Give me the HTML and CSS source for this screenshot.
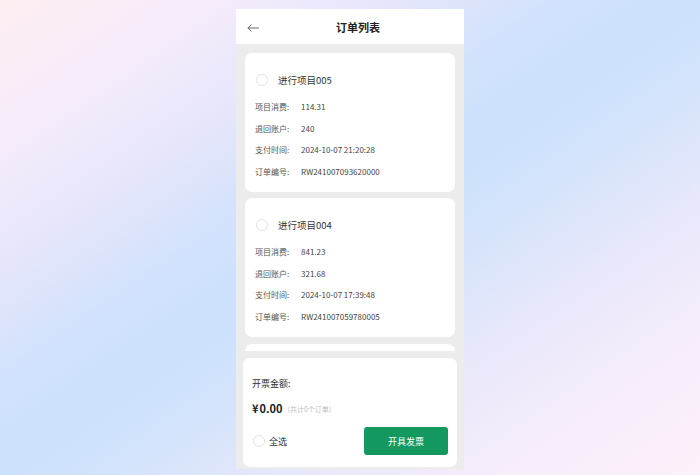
FILE: index.html
```html
<!DOCTYPE html>
<html lang="zh-CN">
<head>
<meta charset="utf-8">
<title>订单列表</title>
<link rel="stylesheet" href="styles.css">
</head>
<body>
<div class="stage">
  <div class="phone">
    <header class="topbar">
      <span class="back">
        <svg width="12" height="8" viewBox="0 0 12 8"><path d="M11.5 4H1M4.2 0.8L1 4l3.2 3.2" fill="none" stroke="#666" stroke-width="1" stroke-linecap="round" stroke-linejoin="round"/></svg>
      </span>
      <h1 class="title">订单列表</h1>
    </header>
    <main class="list">
      <section class="card">
        <div class="card-head"><span class="radio"></span><span class="card-title">进行项目005</span></div>
        <div class="row"><span class="label">项目消费:</span><span class="value">114.31</span></div>
        <div class="row"><span class="label">退回账户:</span><span class="value">240</span></div>
        <div class="row"><span class="label">支付时间:</span><span class="value">2024-10-07 21:20:28</span></div>
        <div class="row"><span class="label">订单编号:</span><span class="value">RW241007093620000</span></div>
      </section>
      <section class="card">
        <div class="card-head"><span class="radio"></span><span class="card-title">进行项目004</span></div>
        <div class="row"><span class="label">项目消费:</span><span class="value">841.23</span></div>
        <div class="row"><span class="label">退回账户:</span><span class="value">321.68</span></div>
        <div class="row"><span class="label">支付时间:</span><span class="value">2024-10-07 17:39:48</span></div>
        <div class="row"><span class="label">订单编号:</span><span class="value">RW241007059780005</span></div>
      </section>
      <section class="card card-peek"></section>
    </main>
    <footer class="footer">
      <div class="amount-label">开票金额:</div>
      <div class="amount"><span class="money"><span class="yen">¥</span>0.00</span><span class="count">(共计0个订单)</span></div>
      <div class="actions">
        <label class="select-all"><span class="radio"></span><span>全选</span></label>
        <button class="invoice-btn">开具发票</button>
      </div>
    </footer>
  </div>
</div>
</body>
</html>
```

FILE: styles.css
```css
* { box-sizing: border-box; margin: 0; padding: 0; }
html, body { height: 100%; }
body {
  font-family: "Noto Sans CJK SC", "Noto Sans", "Liberation Sans", sans-serif;
  background: linear-gradient(to bottom right, #fdeef1 0%, #f7ecfb 14%, #e6e6fb 28%, #d2e2fc 40%, #cbe1fc 50%, #d6e4fb 60%, #e9e8fb 72%, #f7edfb 86%, #fcf1fa 100%);
  overflow: hidden;
}
.stage {
  display: flex;
  justify-content: center;
  padding-top: 9px;
}
.phone {
  width: 228px;
  height: 460px;
  background: #ececec;
  display: flex;
  flex-direction: column;
  overflow: hidden;
}
.topbar {
  height: 35px;
  flex: none;
  background: #fff;
  display: flex;
  align-items: center;
  justify-content: center;
  padding-left: 16px;
  position: relative;
}
.back {
  position: absolute;
  left: 11px;
  top: 15px;
  display: flex;
}
.title {
  font-size: 11px;
  font-weight: 700;
  color: #222;
  line-height: 1;
  margin-top: 1px;
}
.list {
  flex: 1;
  min-height: 0;
  padding: 9px 9px 0;
  display: flex;
  flex-direction: column;
  gap: 6px;
  overflow: hidden;
}
.card {
  flex: none;
  background: #fff;
  border-radius: 7px;
  padding: 17px 10px 10px;
  height: 139px;
}
.card-peek {
  margin-top: 1px;
  height: 40px;
}
.card-head {
  display: flex;
  align-items: center;
  height: 20px;
  padding-left: 1px;
  margin-bottom: 6px;
}
.radio {
  width: 12px;
  height: 12px;
  border-radius: 50%;
  border: 1px solid #e2e2e2;
  flex: none;
}
.card-title {
  margin-left: 10px;
  font-size: 9.5px;
  color: #333;
}
.row {
  display: flex;
  align-items: center;
  height: 21.5px;
  font-size: 8px;
  color: #444;
}
.label {
  width: 46px;
  flex: none;
  color: #555;
}
.footer {
  flex: none;
  margin: 7px 7px 2px;
  height: 109px;
  background: #fff;
  border-radius: 7px;
  padding: 19px 9px 12px;
  display: flex;
  flex-direction: column;
}
.amount-label {
  font-size: 9px;
  color: #333;
  line-height: 14px;
}
.amount {
  margin-top: 10px;
  display: flex;
  align-items: center;
  height: 14px;
}
.money {
  font-size: 11px;
  font-weight: 700;
  color: #222;
}
.yen {
  margin-right: 1px;
}
.count {
  font-size: 7px;
  color: #bbb;
  margin-left: 5px;
  margin-top: 2px;
}
.actions {
  margin-top: auto;
  display: flex;
  align-items: center;
  justify-content: space-between;
}
.select-all {
  display: flex;
  align-items: center;
  gap: 4px;
  font-size: 9px;
  color: #333;
  padding-left: 1px;
}
.invoice-btn {
  width: 84px;
  height: 28px;
  border: none;
  border-radius: 3px;
  background: #13985f;
  color: #fff;
  font-family: inherit;
  font-size: 9px;
}
```
